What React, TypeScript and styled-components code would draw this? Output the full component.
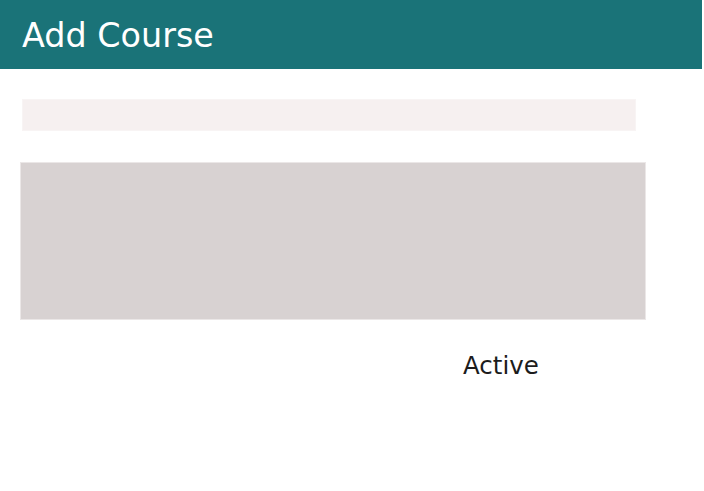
import React from "react";
import styled, { createGlobalStyle } from "styled-components";

const Global = createGlobalStyle`
  html, body { margin: 0; padding: 0; background: #ffffff; }
  body { font-family: "DejaVu Sans", sans-serif; }
`;

const Page = styled.div`
  display: flex;
  flex-direction: column;
  width: 704px;
`;

const Header = styled.header`
  display: flex;
  align-items: center;
  height: 69px;
  width: 702px;
  background: #1a7378;
  padding: 3px 0 0 22px;
  box-sizing: border-box;
`;

const Title = styled.h1`
  margin: 0;
  font-size: 33.4px;
  font-weight: 400;
  color: #ffffff;
  line-height: 1;
`;

const Form = styled.div`
  display: flex;
  flex-direction: column;
  padding: 30px 0 0 0;
`;

const Input = styled.div`
  margin-left: 22px;
  width: 614px;
  height: 32px;
  background: #f6f0f0;
  border: 1px solid #f8f4f4;
  box-sizing: border-box;
`;

const TextArea = styled.div`
  margin-left: 20px;
  margin-top: 31px;
  width: 626px;
  height: 158px;
  background: #d8d2d2;
  border: 1px solid #ebe7e7;
  box-sizing: border-box;
`;

const Row = styled.div`
  display: flex;
  padding-left: 463px;
  margin-top: 30px;
`;

const Label = styled.span`
  font-size: 24.5px;
  color: #1c1c1c;
  line-height: 32px;
`;

export default function App() {
  return (
    <Page>
      <Global />
      <Header>
        <Title>Add Course</Title>
      </Header>
      <Form>
        <Input />
        <TextArea />
        <Row>
          <Label>Active</Label>
        </Row>
      </Form>
    </Page>
  );
}
